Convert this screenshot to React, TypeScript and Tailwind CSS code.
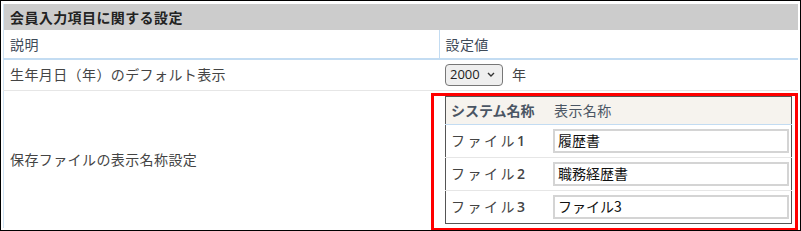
import React from "react";

const font = { fontFamily: '"Noto Sans CJK JP", "Noto Sans", sans-serif' };

export default function App() {
  const rows = [
    { sys: "ファイル", n: "1", val: "履歴書" },
    { sys: "ファイル", n: "2", val: "職務経歴書" },
    { sys: "ファイル", n: "3", val: "ファイル3" },
  ];
  return (
    <div
      className="w-[801px] h-[231px] border border-black bg-white pt-[3px] pl-[2px] pr-[3px] overflow-hidden tracking-[0.4px]"
      style={font}
    >
      <table className="w-[795px] border-collapse text-[14px] border-l border-[#cfe3f3]">
        <tbody>
          <tr className="bg-[#cccccc]">
            <td colSpan={2} className="h-[26px] px-[6px] font-bold text-[#222] leading-none">
              会員入力項目に関する設定
            </td>
          </tr>
          <tr className="border-b-2 border-[#c3dcf2]">
            <td className="w-[437px] h-[29px] px-[6px] text-[#3e4a58]">説明</td>
            <td className="border-l border-[#c3dcf2] px-[6px] text-[#3e4a58]">設定値</td>
          </tr>
          <tr className="border-b border-[#e6e6e6]">
            <td className="h-[31px] px-[6px] text-[#444]">生年月日（年）のデフォルト表示</td>
            <td className="px-[6px]">
              <div className="flex items-center gap-[9px]">
                <div className="flex items-center justify-between w-[58px] h-[22px] rounded-[4px] border border-[#777] bg-[#efefef] pl-[4px] pr-[7px] text-[13px] text-[#222] tracking-normal" style={{ fontFamily: '"Open Sans", "Noto Sans", sans-serif' }}>
                  <span>2000</span>
                  <svg width="8" height="5" viewBox="0 0 8 5"><path d="M1 1l3 3 3-3" stroke="#333" strokeWidth="1.4" fill="none" /></svg>
                </div>
                <span className="text-[#444]">年</span>
              </div>
            </td>
          </tr>
          <tr>
            <td className="h-[138px] px-[6px] text-[#444]">保存ファイルの表示名称設定</td>
            <td className="px-[6px] relative">
              <div className="absolute left-[-8px] top-[2px] w-[367px] h-[138px] border-[3px] border-[#ff0000] pointer-events-none" />
              <table className="w-[347px] border border-[#555] border-collapse mt-[1px] tracking-normal">
                <tbody>
                  <tr className="bg-[#f6f3ee] border-b border-[#c3dcf2]">
                    <th className="h-[28px] w-[108px] text-left pl-[5px] font-semibold text-[#4a5563] text-[14px]">システム名称</th>
                    <th className="text-left pl-[1px] font-normal text-[#4a5563] text-[14px] tracking-[0.4px]">表示名称</th>
                  </tr>
                  {rows.map((r, i) => (
                    <tr key={i} className={i < 2 ? "border-b border-[#e6e6e6]" : ""}>
                      <td className="h-[33px] pl-[5px] text-[#444]">
                        <span className="tracking-[2.5px]">{r.sys}</span>
                        <span className="font-semibold" style={{ fontFamily: '"Open Sans", sans-serif' }}>{r.n}</span>
                      </td>
                      <td className="pr-[2px]">
                        <div className="w-[236px] h-[24px] border-2 border-[#d4d4d4] bg-white flex items-center pl-[3px] text-[14px] text-[#111]">
                          {r.val}
                        </div>
                      </td>
                    </tr>
                  ))}
                </tbody>
              </table>
            </td>
          </tr>
        </tbody>
      </table>
    </div>
  );
}
